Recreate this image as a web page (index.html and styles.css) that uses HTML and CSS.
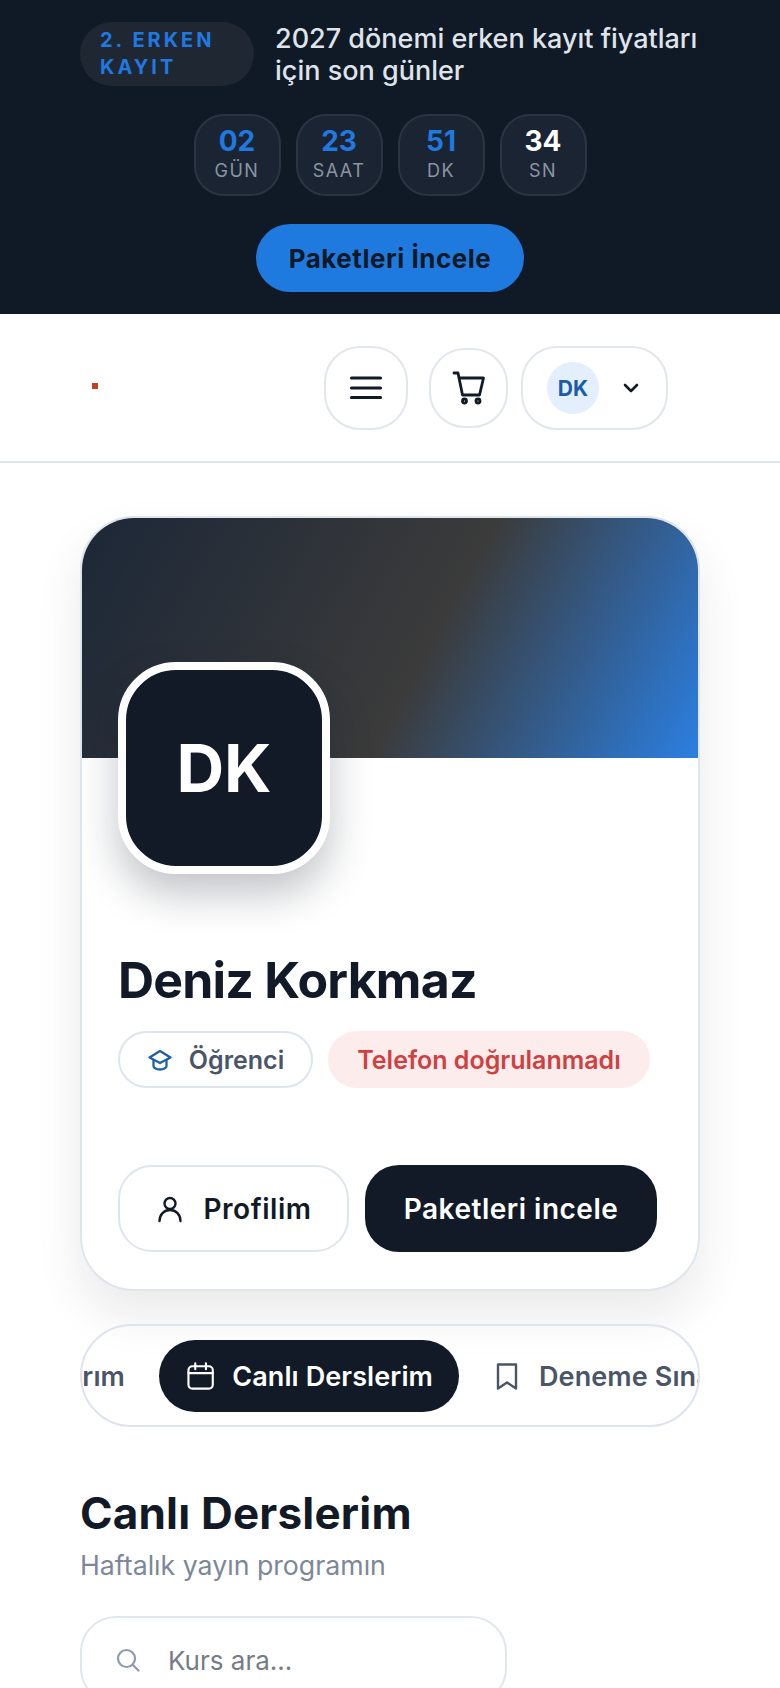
FILE: index.html
```html
<!DOCTYPE html>
<html lang="tr">
<head>
    <meta charset="UTF-8">
    <meta name="viewport" content="width=device-width, initial-scale=1.0">
    <title>Canlı Derslerim</title>
    <link rel="stylesheet" href="styles.css">
</head>
<body>

    <!-- Campaign banner -->
    <div class="promo">
        <div class="promo-row">
            <span class="promo-badge">2. ERKEN KAYIT</span>
            <p class="promo-text">2027 dönemi erken kayıt fiyatları için son günler</p>
        </div>
        <div class="timer">
            <div class="timer-box"><b>02</b><span>GÜN</span></div>
            <div class="timer-box"><b>23</b><span>SAAT</span></div>
            <div class="timer-box"><b>51</b><span>DK</span></div>
            <div class="timer-box timer-last"><b>34</b><span>SN</span></div>
        </div>
        <a class="promo-btn" href="#">Paketleri İncele</a>
    </div>

    <!-- Header -->
    <div class="topbar">
        <span class="logo-dot"></span>
        <button class="icon-btn menu-btn" aria-label="Menü">
            <svg width="36" height="28" viewBox="0 0 36 28"><path d="M3.500 4h29M3.500 14h29M3.500 23.500h29" fill="none" stroke="#111a26" stroke-width="3.200" stroke-linecap="round"/></svg>
        </button>
        <button class="icon-btn cart-btn" aria-label="Sepet">
            <svg width="36" height="36" viewBox="0 0 36 36" fill="none" stroke="#111a26" stroke-width="2.800" stroke-linecap="round" stroke-linejoin="round"><path d="M3 3h4l4.500 22h17l4-17H8.500"/><circle cx="13.500" cy="31" r="2"/><circle cx="27" cy="31" r="2"/></svg>
        </button>
        <button class="icon-btn user-btn" aria-label="Hesap">
            <span class="user-avatar">DK</span>
            <svg width="16" height="12" viewBox="0 0 16 12"><path d="M2 3l6 6 6-6" fill="none" stroke="#111a26" stroke-width="2.600" stroke-linecap="round" stroke-linejoin="round"/></svg>
        </button>
    </div>

    <div class="container">

        <!-- Profile card -->
        <div class="profile-card">
            <div class="cover"></div>
            <div class="profile-body">
                <div class="big-avatar">DK</div>
                <h1>Deniz Korkmaz</h1>
                <div class="pills">
                    <span class="pill pill-role">
                        <svg width="26" height="26" viewBox="0 0 26 26" fill="none" stroke="#1f5fa8" stroke-width="2.300" stroke-linecap="round" stroke-linejoin="round"><path d="M13 4L2.500 10.500 13 16l10.500-5.500z"/><path d="M6.500 13v6c0 2 3 3.500 6.500 3.500s6.500-1.500 6.500-3.500v-6"/></svg>
                        Öğrenci
                    </span>
                    <span class="pill pill-warn">Telefon doğrulanmadı</span>
                </div>
                <div class="actions">
                    <a class="btn btn-light" href="#">
                        <svg width="28" height="28" viewBox="0 0 28 28" fill="none" stroke="#111a26" stroke-width="2.400" stroke-linecap="round" stroke-linejoin="round"><circle cx="14" cy="8.500" r="5.500"/><path d="M3.500 26c0-6.500 4.500-11 10.500-11s10.500 4.500 10.500 11"/></svg>
                        Profilim
                    </a>
                    <a class="btn btn-dark" href="#">Paketleri incele</a>
                </div>
            </div>
        </div>

        <!-- Tabs -->
        <div class="tabs">
            <div class="tabs-track">
                <a class="tab" href="#">Kurslarım</a>
                <a class="tab active" href="#">
                    <svg width="28" height="30" viewBox="0 0 28 30" fill="none" stroke="#fff" stroke-width="2.200" stroke-linecap="round" stroke-linejoin="round"><rect x="1.500" y="5" width="25" height="23" rx="4"/><path d="M1.500 12h25M8.500 2v6M19.500 2v6"/></svg>
                    Canlı Derslerim
                </a>
                <a class="tab" href="#">
                    <svg width="24" height="30" viewBox="0 0 24 30" fill="none" stroke="#4a5568" stroke-width="2.400" stroke-linecap="round" stroke-linejoin="round"><path d="M3 3.500h18v24l-9-6-9 6z"/></svg>
                    Deneme Sınavlarım
                </a>
            </div>
        </div>

        <!-- Section -->
        <h2>Canlı Derslerim</h2>
        <p class="subtitle">Haftalık yayın programın</p>

        <div class="search">
            <svg width="24" height="24" viewBox="0 0 24 24" fill="none" stroke="#8f9bab" stroke-width="2.200" stroke-linecap="round"><circle cx="10.500" cy="10.500" r="8.500"/><path d="M17 17l5.500 5.500"/></svg>
            <span class="search-text">Kurs ara…</span>
        </div>

    </div>

</body>
</html>
```

FILE: styles.css
```css
* {
    box-sizing: border-box;
}

html, body {
    height: 1688px;
    overflow: hidden;
}

body {
    font-family: 'Inter', sans-serif;
    margin: 0;
    padding: 0;
    background-color: #fff;
    color: #111a26;
}

a {
    text-decoration: none;
}

button {
    font-family: inherit;
    background: #fff;
    padding: 0;
}

/* Campaign banner */
.promo {
    height: 314px;
    padding-top: 22px;
    background-color: #101926;
    display: flex;
    flex-direction: column;
    align-items: center;
}

.promo-row {
    width: 620px;
    height: 64px;
    display: flex;
    align-items: center;
    gap: 21px;
}

.promo-badge {
    width: 174px;
    height: 64px;
    flex-shrink: 0;
    padding: 5px 20px;
    border-radius: 32px;
    background-color: #1f2733;
    color: #2079e0;
    font-size: 20px;
    font-weight: 700;
    letter-spacing: 3px;
    line-height: 27px;
}

.promo-text {
    margin: 2px 0 0;
    color: #dfe4ea;
    font-size: 27px;
    font-weight: 500;
    line-height: 32px;
}

.timer {
    display: flex;
    gap: 15px;
    margin-top: 28px;
}

.timer-box {
    width: 87px;
    height: 82px;
    border: 2px solid #2a3443;
    border-radius: 30px;
    background-color: #1a2433;
    display: flex;
    flex-direction: column;
    align-items: center;
    padding-top: 8px;
}

.timer-box b {
    color: #2079e0;
    font-size: 28px;
    line-height: 34px;
}

.timer-box span {
    color: #8a94a3;
    font-size: 18px;
    letter-spacing: 1.500px;
    line-height: 26px;
}

.timer-last b {
    color: #fff;
}

.promo-btn {
    width: 268px;
    height: 68px;
    margin-top: 28px;
    border-radius: 34px;
    background-color: #1f7ae0;
    color: #101926;
    font-size: 26px;
    font-weight: 700;
    letter-spacing: 0.500px;
    display: flex;
    align-items: center;
    justify-content: center;
}

/* Header */
.topbar {
    height: 149px;
    padding: 32px 0 0 92px;
    border-bottom: 2px solid #dde4ea;
    display: flex;
    align-items: flex-start;
}

.logo-dot {
    width: 6px;
    height: 6px;
    margin-top: 37px;
    background-color: #c2401c;
}

.icon-btn {
    height: 84px;
    border: 2px solid #e2e7ec;
    border-radius: 36px;
    display: flex;
    align-items: center;
    justify-content: center;
}

.menu-btn {
    width: 84px;
    margin-left: 226px;
}

.cart-btn {
    width: 79px;
    height: 80px;
    margin: 2px 0 0 21px;
}

.user-btn {
    width: 147px;
    margin-left: 13px;
    padding: 0 27px 0 24px;
    justify-content: space-between;
}

.user-avatar {
    width: 52px;
    height: 52px;
    border-radius: 50%;
    background-color: #e3effd;
    color: #1a5ca8;
    font-size: 21px;
    font-weight: 700;
    display: flex;
    align-items: center;
    justify-content: center;
}

/* Main content */
.container {
    padding: 53px 80px 0;
}

.profile-card {
    height: 775px;
    border: 2px solid #dfe5ec;
    border-radius: 54px;
    background-color: #fff;
    box-shadow: 0 24px 48px rgba(17, 26, 38, 0.09);
    overflow: hidden;
}

.cover {
    height: 240px;
    background: linear-gradient(118deg, #1c2737 0%, #3b3b3b 56%, #2b7fe2 100%);
}

.profile-body {
    padding: 0 36px;
}

.big-avatar {
    position: relative;
    width: 212px;
    height: 212px;
    margin-top: -96px;
    border: 8px solid #fff;
    border-radius: 58px;
    background-color: #111a26;
    color: #fff;
    font-size: 66px;
    font-weight: 700;
    box-shadow: 0 20px 40px rgba(17, 26, 38, 0.26);
    display: flex;
    align-items: center;
    justify-content: center;
}

h1 {
    margin: 76px 0 0;
    font-size: 50px;
    font-weight: 700;
    letter-spacing: -0.800px;
    line-height: 60px;
}

.pills {
    display: flex;
    gap: 15px;
    margin-top: 21px;
}

.pill {
    height: 57px;
    border-radius: 29px;
    font-size: 25px;
    font-weight: 600;
    display: flex;
    align-items: center;
    justify-content: center;
    white-space: nowrap;
}

.pill-role {
    width: 195px;
    gap: 16px;
    border: 2px solid #dfe5ec;
    color: #4a5568;
}

.pill-warn {
    width: 322px;
    background-color: #fdecec;
    color: #d04040;
}

.actions {
    display: flex;
    gap: 16px;
    margin-top: 77px;
}

.btn {
    height: 87px;
    border-radius: 34px;
    font-size: 28px;
    font-weight: 600;
    letter-spacing: 0.500px;
    display: flex;
    align-items: center;
    justify-content: center;
    white-space: nowrap;
}

.btn-light {
    width: 231px;
    gap: 20px;
    border: 2px solid #dfe5ec;
    color: #111a26;
}

.btn-dark {
    width: 292px;
    flex-shrink: 0;
    background-color: #111a26;
    color: #fff;
}

/* Tabs */
.tabs {
    height: 103px;
    margin-top: 33px;
    padding: 14px 0;
    border: 2px solid #dfe3ec;
    border-radius: 52px;
    overflow: hidden;
}

.tabs-track {
    display: flex;
    gap: 8px;
    width: max-content;
    margin-left: -111px;
}

.tab {
    height: 72px;
    padding: 0 26px 0 28px;
    border-radius: 36px;
    color: #4a5568;
    font-size: 27px;
    font-weight: 600;
    letter-spacing: 0.100px;
    display: flex;
    align-items: center;
    gap: 20px;
    white-space: nowrap;
}

.tab.active {
    width: 300px;
    gap: 18px;
    background-color: #111a26;
    color: #fff;
}

/* Section */
h2 {
    margin: 59px 0 0;
    font-size: 44px;
    font-weight: 700;
    letter-spacing: 0.200px;
    line-height: 54px;
}

.subtitle {
    margin: 7px 0 0;
    color: #7c8899;
    font-size: 26.700px;
    line-height: 36px;
}

.search {
    width: 427px;
    height: 88px;
    margin-top: 33px;
    padding-left: 34px;
    border: 2px solid #e2e7ec;
    border-radius: 36px;
    display: flex;
    align-items: center;
    gap: 28px;
}

.search-text {
    color: #767c85;
    font-size: 26px;
}
```
